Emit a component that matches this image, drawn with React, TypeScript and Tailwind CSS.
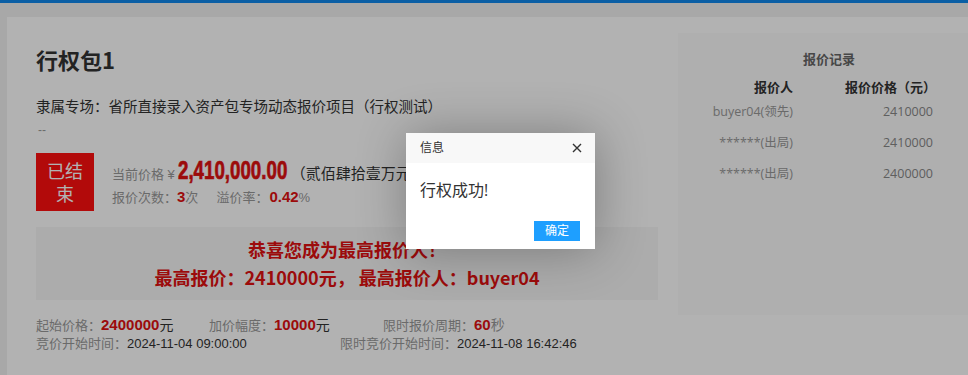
import React from "react";

const cjk = { fontFamily: '"Liberation Sans", "Noto Sans CJK SC", sans-serif' };
const ui = { fontFamily: '"Open Sans", "Noto Sans CJK SC", sans-serif' };
const noto = { fontFamily: '"Noto Sans CJK SC", sans-serif' };

function Records() {
  const rows = [
    ["buyer04(领先)", "2410000"],
    ["******(出局)", "2410000"],
    ["******(出局)", "2400000"],
  ];
  return (
    <div className="mt-[16px] w-[300px] h-[282px] shrink-0 bg-[#fbfbfb]" style={ui}>
      <div className="pt-[16px] h-[41px] text-center text-[13px] leading-[20px] font-bold text-[#666] pl-[2px]" style={noto}>报价记录</div>
      <div className="flex h-[26px] items-center text-[13px] font-bold text-[#333]" style={noto}>
        <div className="w-[115px] text-right">报价人</div>
        <div className="w-[143px] text-right">报价价格（元）</div>
      </div>
      <div className="mt-[-3px]">
        {rows.map((r, i) => (
          <div key={i} className="flex h-[31px] items-center text-[12.5px] text-[#999]">
            <div className="w-[115px] text-right">{r[0]}</div>
            <div className="w-[140px] text-right text-[#888]">{r[1]}</div>
          </div>
        ))}
      </div>
    </div>
  );
}

export default function App() {
  return (
    <div className="relative w-[968px] h-[375px] overflow-hidden bg-[#f1f1f1]" style={cjk}>
      <div className="h-[3px] bg-[#1088ec]" />
      <div className="ml-[7px] mt-[14px] w-[1000px] h-[400px] bg-white flex">
        <div className="w-[671px] shrink-0 pl-[29px] pr-[20px] pt-[26px]">
          <div className="text-[22px] leading-[32px] font-bold text-[#333]" style={noto}>行权包1</div>
          <div className="mt-[20px] text-[14.5px] leading-[22px] text-[#333]" style={noto}>
            隶属专场：省所直接录入资产包专场动态报价项目（行权测试）
          </div>
          <div className="mt-[3px] h-[20px] text-[12px] leading-[20px] text-[#999] pl-[2px]">--</div>
          <div className="mt-[13px] flex items-start">
            <div className="w-[58px] h-[58px] bg-[#ff0f0f] text-white text-[18px] leading-[23px] flex flex-col items-center justify-center" style={noto}>
              <span className="block h-[23px]">已结</span>
              <span className="block h-[23px]">束</span>
            </div>
            <div className="ml-[18px] pt-[3px]">
              <div className="flex items-baseline h-[28px] leading-[28px]">
                <span className="text-[13px] text-[#999]">当前价格 ¥</span>
                <span className="inline-block w-[113px] ml-[3px] leading-[28px]">
                  <span
                    className="inline-block origin-left scale-x-[0.72] text-[26px] leading-[28px] font-bold text-[#e01010] whitespace-nowrap [-webkit-text-stroke:0.7px_#e01010]"
                    style={{ fontFamily: '"Liberation Sans", sans-serif' }}
                  >
                    2,410,000.00
                  </span>
                </span>
                <span className="ml-[0px] text-[15px] text-[#333]" style={noto}>（贰佰肆拾壹万元）</span>
              </div>
              <div className="flex items-baseline h-[26px] leading-[26px] text-[13px] text-[#999]">
                <span>报价次数：</span>
                <span className="font-bold text-[#e01010] text-[15px]">3</span>
                <span>次</span>
                <span className="ml-[18px]">溢价率：</span>
                <span className="ml-[1px] font-bold text-[#e01010] text-[15px]">0.42</span>
                <span>%</span>
              </div>
            </div>
          </div>
          <div className="mt-[16px] w-[622px] h-[73px] bg-[#f6f6f6] flex flex-col items-center pt-[8px] text-[18px] leading-[28px] font-bold text-[#e01010]" style={noto}>
            <div>恭喜您成为最高报价人！</div>
            <div>最高报价：2410000元， 最高报价人：buyer04</div>
          </div>
          <div className="mt-[14px] flex items-baseline h-[20px] text-[13px] text-[#999]">
            <div className="w-[173px]">
              起始价格：<span className="font-bold text-[#e01010] text-[15px]">2400000</span><span className="text-[#333] text-[14px]">元</span>
            </div>
            <div className="w-[174px]">
              加价幅度：<span className="font-bold text-[#e01010] text-[15px]">10000</span><span className="text-[#333] text-[14px]">元</span>
            </div>
            <div>
              限时报价周期：<span className="font-bold text-[#e01010] text-[15px]">60</span><span className="text-[14px]">秒</span>
            </div>
          </div>
          <div className="flex items-baseline h-[20px] text-[13px] text-[#999]">
            <div className="w-[304px]">
              竞价开始时间：<span className="text-[#333] text-[13px]">2024-11-04 09:00:00</span>
            </div>
            <div>
              限时竞价开始时间：<span className="text-[#333] text-[13px]">2024-11-08 16:42:46</span>
            </div>
          </div>
        </div>
        <Records />
      </div>

      <div className="absolute inset-0 bg-black/30" />

      <div className="absolute left-[406px] top-[133px] w-[189px] h-[116px] bg-white shadow-[1px_1px_50px_rgba(0,0,0,0.3)]" style={ui}>
        <div className="h-[30px] bg-[#f8f8f8] flex items-center justify-between pl-[14px] pr-[12px] text-[12px] text-[#333]">
          <span>信息</span>
          <svg width="10" height="10" viewBox="0 0 10 10" className="mr-[1px]">
            <path d="M1 1L9 9M9 1L1 9" stroke="#333" strokeWidth="1.4" />
          </svg>
        </div>
        <div className="pl-[14px] pt-[15px] h-[58px] text-[16px] leading-[24px] text-[#333]">行权成功!</div>
        <div className="flex justify-end pr-[15px]">
          <div className="w-[46px] h-[20px] bg-[#1e9fff] text-white text-[12px] leading-[20px] text-center">确定</div>
        </div>
      </div>
    </div>
  );
}
